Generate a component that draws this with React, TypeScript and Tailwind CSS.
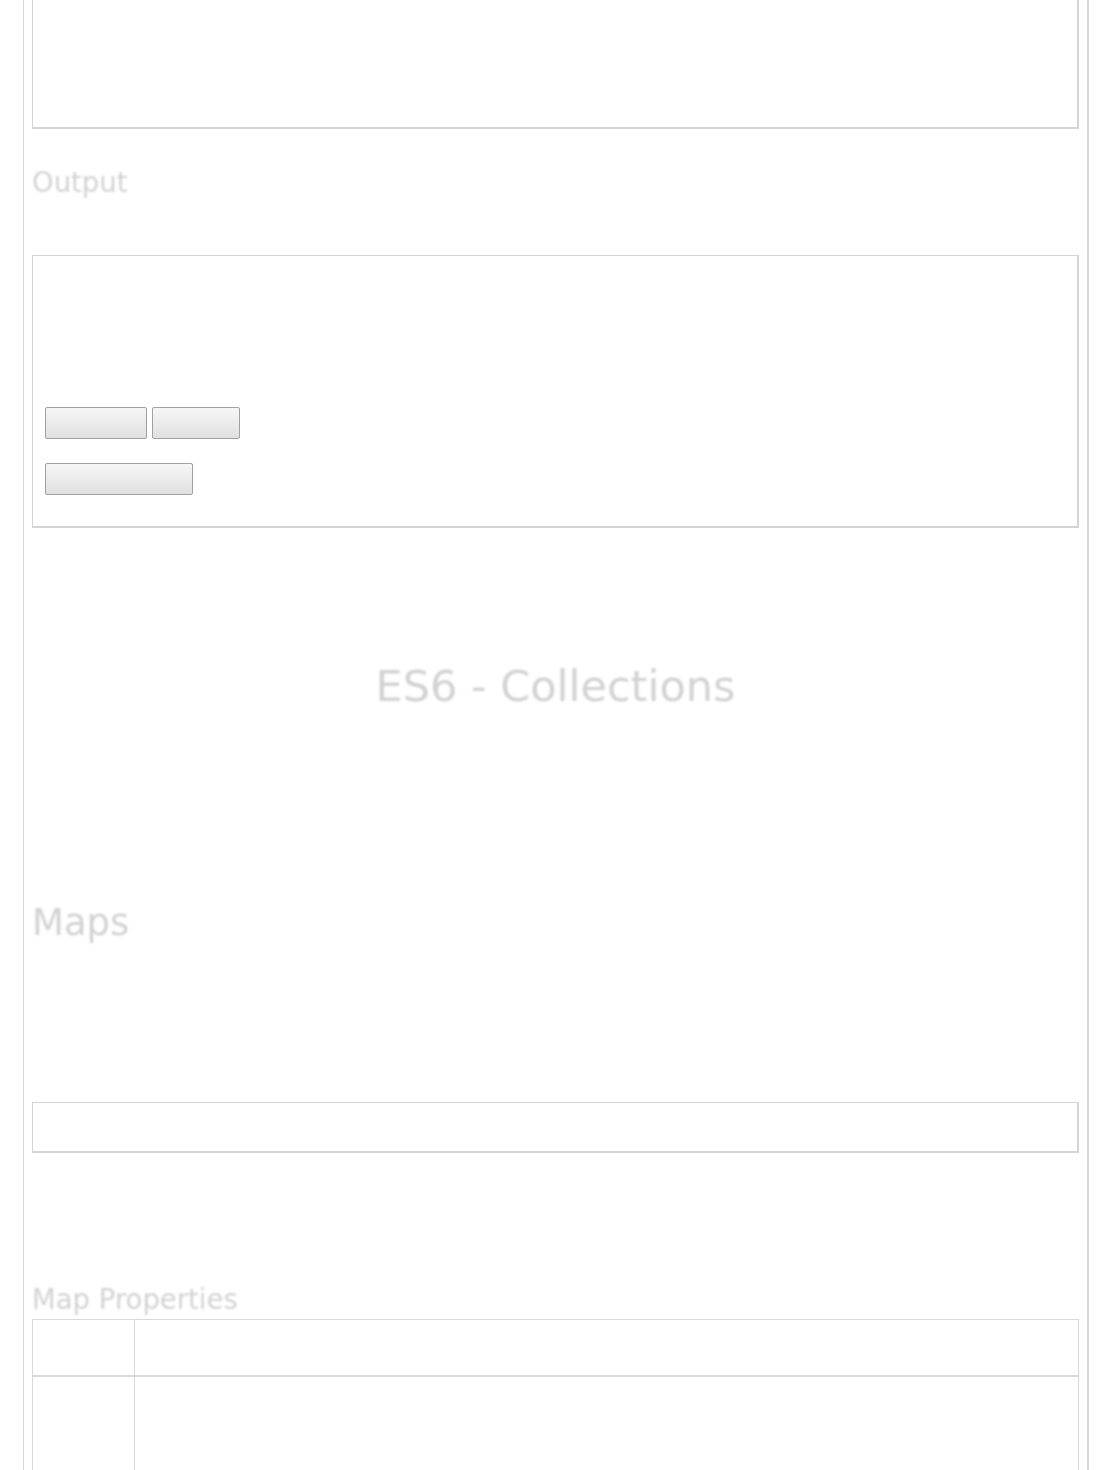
import React from "react";

const font = { fontFamily: '"DejaVu Sans", Verdana, sans-serif' };

function Btn({ w }: { w: string }) {
  return (
    <div
      className={`${w} h-[32px] rounded-[2px] border border-[#a0a0a0] bg-gradient-to-b from-[#f6f6f6] to-[#e0e0e0]`}
    />
  );
}

export default function App() {
  return (
    <div className="min-h-[1470px] bg-white" style={font}>
      <div className="ml-[23px] w-[1066px] min-h-[1470px] border-l border-r-2 border-[#d6d6d6] pl-[8px]">
        {/* code box, top cut off */}
        <div className="h-[129px] w-[1047px] border border-b-2 border-r-2 border-t-0 border-[#d4d4d4]" />

        <h3 className="mt-[33px] h-[40px] text-[27.5px] leading-[40px] text-[#d2d2d2] blur-[0.9px]">Output</h3>

        {/* output box */}
        <div className="mt-[53px] h-[273px] w-[1047px] border border-b-2 border-r-2 border-[#d4d4d4] px-[12px] pt-[151px]">
          <div className="flex gap-[5px]">
            <Btn w="w-[102px]" />
            <Btn w="w-[88px]" />
          </div>
          <div className="mt-[24px]">
            <Btn w="w-[148px]" />
          </div>
        </div>

        <h1 className="mt-[132px] h-[52px] w-[1047px] text-center text-[43px] leading-[52px] text-[#d2d2d2] blur-[0.9px]">
          ES6 - Collections
        </h1>

        <h2 className="mt-[187px] h-[48px] text-[37px] leading-[48px] text-[#d2d2d2] blur-[0.9px]">Maps</h2>

        <div className="mt-[155px] h-[51px] w-[1047px] border border-b-2 border-r-2 border-[#d4d4d4]" />

        <h3 className="mt-[126px] h-[40px] text-[27.5px] leading-[40px] text-[#d2d2d2] blur-[0.9px]">Map Properties</h3>

        <table className="w-[1047px] border-collapse">
          <tbody>
            <tr className="h-[56px]">
              <td className="w-[102px] border border-[#d9d9d9]" />
              <td className="border border-[#d9d9d9]" />
            </tr>
            <tr className="h-[120px]">
              <td className="w-[102px] border border-t-2 border-[#d9d9d9]" />
              <td className="border border-t-2 border-[#d9d9d9]" />
            </tr>
          </tbody>
        </table>
      </div>
    </div>
  );
}
